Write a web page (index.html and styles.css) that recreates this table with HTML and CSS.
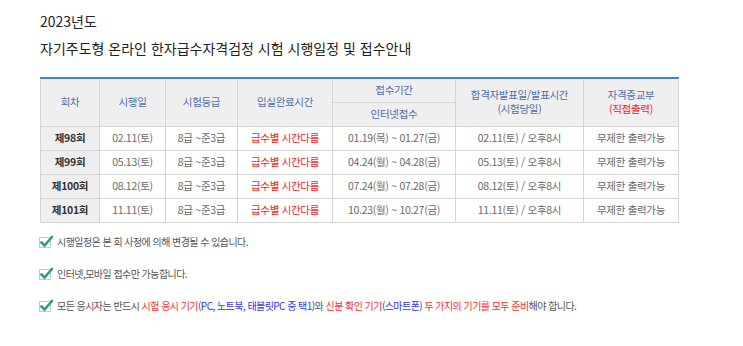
FILE: index.html
```html
<!DOCTYPE html>
<html lang="ko">
<head>
<meta charset="utf-8">
<link rel="stylesheet" href="styles.css">
</head>
<body>
<div class="page">
  <h1 class="title">
    <span class="year">2023년도</span>
    <span class="sub">자기주도형 온라인 한자급수자격검정 시험 시행일정 및 접수안내</span>
  </h1>
  <table class="sched">
    <colgroup>
      <col style="width:59px"><col style="width:66px"><col style="width:72px"><col style="width:95px"><col style="width:123px"><col style="width:128px"><col style="width:95px">
    </colgroup>
    <thead>
      <tr>
        <th rowspan="2">회차</th>
        <th rowspan="2">시행일</th>
        <th rowspan="2">시험등급</th>
        <th rowspan="2">입실완료시간</th>
        <th class="half">접수기간</th>
        <th rowspan="2">합격자발표일/발표시간<br>(시험당일)</th>
        <th rowspan="2">자격증교부<br><span class="red">(직접출력)</span></th>
      </tr>
      <tr>
        <th class="half">인터넷접수</th>
      </tr>
    </thead>
    <tbody>
      <tr><td class="round">제98회</td><td>02.11(토)</td><td>8급 ~준3급</td><td class="red">급수별 시간다름</td><td>01.19(목) ~ 01.27(금)</td><td>02.11(토) / 오후8시</td><td>무제한 출력가능</td></tr>
      <tr><td class="round">제99회</td><td>05.13(토)</td><td>8급 ~준3급</td><td class="red">급수별 시간다름</td><td>04.24(월) ~ 04.28(금)</td><td>05.13(토) / 오후8시</td><td>무제한 출력가능</td></tr>
      <tr><td class="round">제100회</td><td>08.12(토)</td><td>8급 ~준3급</td><td class="red">급수별 시간다름</td><td>07.24(월) ~ 07.28(금)</td><td>08.12(토) / 오후8시</td><td>무제한 출력가능</td></tr>
      <tr><td class="round">제101회</td><td>11.11(토)</td><td>8급 ~준3급</td><td class="red">급수별 시간다름</td><td>10.23(월) ~ 10.27(금)</td><td>11.11(토) / 오후8시</td><td>무제한 출력가능</td></tr>
    </tbody>
  </table>
  <ul class="notes">
    <li><svg class="chk" viewBox="0 0 14 13" width="14" height="13"><rect x="0.5" y="2.5" width="11" height="10" fill="#fff" stroke="#b8cfcf"/><path d="M2.5 7.5 L5.5 10.5 L13 2" fill="none" stroke="#2f9c8c" stroke-width="2.6" stroke-linecap="square"/></svg><span>시행일정은 본 회 사정에 의해 변경될 수 있습니다.</span></li>
    <li><svg class="chk" viewBox="0 0 14 13" width="14" height="13"><rect x="0.5" y="2.5" width="11" height="10" fill="#fff" stroke="#b8cfcf"/><path d="M2.5 7.5 L5.5 10.5 L13 2" fill="none" stroke="#2f9c8c" stroke-width="2.6" stroke-linecap="square"/></svg><span>인터넷,모바일 접수만 가능합니다.</span></li>
    <li><svg class="chk" viewBox="0 0 14 13" width="14" height="13"><rect x="0.5" y="2.5" width="11" height="10" fill="#fff" stroke="#b8cfcf"/><path d="M2.5 7.5 L5.5 10.5 L13 2" fill="none" stroke="#2f9c8c" stroke-width="2.6" stroke-linecap="square"/></svg><span>모든 응시자는 반드시 <b class="r">시험 응시 기기</b><b class="b">(PC, 노트북, 태블릿PC 중 택1)</b>와 <b class="r">신분 확인 기기</b><b class="b">(스마트폰)</b> <b class="r">두 가지의 기기를 모두 준비</b>해야 합니다.</span></li>
  </ul>
</div>
</body>
</html>
```

FILE: styles.css
```css
* { box-sizing: border-box; }
html, body { margin: 0; padding: 0; background: #fff; }
body {
  font-family: "Noto Sans CJK KR", "Noto Sans", sans-serif;
  color: #333;
}
.page {
  padding: 10px 0 0 40px;
}
.title {
  margin: 0;
  font-weight: normal;
  font-size: 14px;
  color: #222;
  display: flex;
  flex-direction: column;
}
.title .year {
  line-height: 22px;
}
.title .sub {
  margin-top: 4px;
  line-height: 24px;
}
.sched {
  margin-top: 17px;
  width: 639px;
  border-collapse: collapse;
  table-layout: fixed;
  border-top: 2px solid #4a7fd0;
  border-left: 1px solid #d6d6d6;
  border-right: 1px solid #d6d6d6;
  font-size: 10.5px;
  letter-spacing: -0.3px;
}
.sched th, .sched td {
  border: 1px solid #d6d6d6;
  text-align: center;
  padding: 0;
  font-weight: normal;
}
.sched th {
  background: #efefef;
  color: #4f6db0;
  line-height: 14px;
  height: 24px;
}
.sched td {
  height: 24px;
  line-height: 14px;
  color: #6a6a6a;
}
.sched td.round {
  background: #efefef;
  color: #333;
  font-weight: bold;
}
.sched .red, .sched td.red { color: #ff2020; }
.notes {
  list-style: none;
  margin: 10px 0 0 0;
  padding: 0;
  display: flex;
  flex-direction: column;
  gap: 14px;
  font-size: 10px;
  letter-spacing: -0.55px;
  color: #555;
}
.notes li {
  display: flex;
  align-items: center;
  gap: 4px;
  height: 18px;
}
.chk { flex: none; margin-left: -1px; }
.notes b { font-weight: normal; }
.notes .r { color: #ff2a2a; }
.notes .b { color: #3232f0; }
```
